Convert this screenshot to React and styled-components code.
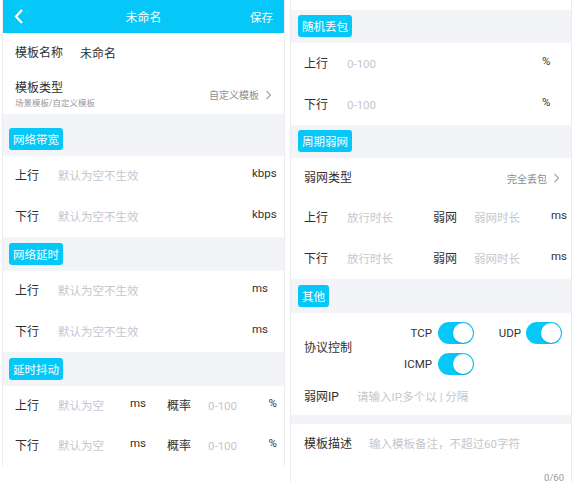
import React from 'react';
import styled, { createGlobalStyle } from 'styled-components';

const GlobalStyle = createGlobalStyle`
  body {
    margin: 0;
    background: #fff;
  }
`;

const Page = styled.div`
  display: flex;
  align-items: flex-start;
  gap: 5px;
  padding-left: 2px;
  font-family: Roboto, 'Noto Sans CJK SC', sans-serif;
  color: #333;
`;

const Panel = styled.div`
  box-sizing: border-box;
  width: ${p => p.$w}px;
  display: flex;
  flex-direction: column;
  border-left: 1px solid #ececef;
  border-right: 1px solid #ececef;
`;

const Header = styled.div`
  height: 33px;
  display: grid;
  grid-template-columns: 1fr auto 1fr;
  align-items: center;
  padding: 0 11px 0 11px;
  background: #06c8f8;
  color: #fff;
`;

const Title = styled.div`
  font-size: 12px;
`;

const Save = styled.div`
  font-size: 11.5px;
  justify-self: end;
`;

const Row = styled.div`
  box-sizing: border-box;
  height: ${p => p.$h ?? 40}px;
  display: flex;
  align-items: center;
  padding: 0 ${p => p.$pr ?? 7}px 0 ${p => p.$pl ?? 12}px;
  background: #fff;
`;

const Label = styled.div`
  width: ${p => p.$w || 43}px;
  flex-shrink: 0;
  font-size: 12px;
  line-height: 16px;
  color: #2f2f2f;
`;

const Value = styled.div`
  font-size: 12px;
  color: #2f2f2f;
`;

const Placeholder = styled.div`
  ${p => (p.$w ? `width: ${p.$w}px; flex-shrink: 0;` : 'flex: 1;')}
  font-size: 11.5px;
  line-height: 16px;
  color: #c4c7cd;
  white-space: nowrap;
`;

const Unit = styled.div`
  ${p => (p.$w ? `width: ${p.$w}px; flex-shrink: 0;` : '')}
  margin-bottom: 6px;
  font-size: 11.5px;
  color: #333;
`;

const TypeRow = styled(Row)`
  justify-content: space-between;
  padding-top: 3px;
`;

const TypeText = styled.div`
  display: flex;
  flex-direction: column;
`;

const SubText = styled.div`
  margin-top: 1px;
  font-size: 8.5px;
  line-height: 12px;
  color: #9a9a9a;
`;

const Picker = styled.div`
  display: flex;
  align-items: center;
  gap: 6px;
  margin-left: auto;
  font-size: 10px;
  color: #8c8c8c;
`;

const SectionHead = styled.div`
  box-sizing: border-box;
  height: ${p => p.$h}px;
  display: flex;
  align-items: flex-end;
  padding: 0 0 ${p => p.$pb || 6}px ${p => p.$pl || 6}px;
  background: #f3f4f7;
`;

const Badge = styled.div`
  height: 22px;
  display: flex;
  align-items: center;
  padding: 0 4px;
  border-radius: 3px;
  background: #06c8f8;
  color: #fff;
  font-size: 11.5px;
`;

const Spacer = styled.div`
  height: ${p => p.$h}px;
  background: ${p => p.$bg || '#fff'};
`;

const ProtoRow = styled.div`
  display: flex;
  align-items: center;
  padding: 9px 9px 4px 13px;
  background: #fff;
`;

const ToggleGrid = styled.div`
  display: grid;
  grid-template-columns: 70px 88px;
  row-gap: 9px;
  justify-items: end;
`;

const ToggleItem = styled.div`
  display: flex;
  align-items: center;
  gap: ${p => p.$gap || 6}px;
  font-size: 11.5px;
  color: #333;
`;

const Track = styled.div`
  box-sizing: border-box;
  width: 36px;
  height: 22px;
  display: flex;
  justify-content: flex-end;
  padding: 1px;
  border-radius: 11px;
  background: #06c8f8;
`;

const Knob = styled.div`
  width: 20px;
  height: 20px;
  border-radius: 50%;
  background: #fff;
  box-shadow: 0 1px 2px rgba(0, 0, 0, 0.15);
`;

const DescBox = styled.div`
  box-sizing: border-box;
  height: 58px;
  display: flex;
  flex-direction: column;
  padding: 12px 7px 0 13px;
  background: #fff;
`;

const Counter = styled.div`
  margin-top: 20px;
  align-self: flex-end;
  font-size: 9.5px;
  line-height: 12px;
  color: #999;
`;

const Chevron = ({ color = '#a8a8a8', w = 7, h = 10, sw = 1.2 }) => (
  <svg width={w} height={h} viewBox="0 0 7 10">
    <polyline points="1.5,1 5.5,5 1.5,9" fill="none" stroke={color} strokeWidth={sw} />
  </svg>
);

const Toggle = ({ label, gap }) => (
  <ToggleItem $gap={gap}>
    {label}
    <Track>
      <Knob />
    </Track>
  </ToggleItem>
);

const SimpleRow = ({ label, hint, unit, h }) => (
  <Row $h={h}>
    <Label>{label}</Label>
    <Placeholder>{hint}</Placeholder>
    <Unit $w={25}>{unit}</Unit>
  </Row>
);

const JitterRow = ({ label }) => (
  <Row>
    <Label>{label}</Label>
    <Placeholder $w={72}>默认为空</Placeholder>
    <Unit $w={37}>ms</Unit>
    <Label $w={41}>概率</Label>
    <Placeholder>0-100</Placeholder>
    <Unit>%</Unit>
  </Row>
);

const DropRow = ({ label }) => (
  <Row $h={41} $pl={13} $pr={4}>
    <Label>{label}</Label>
    <Placeholder>0-100</Placeholder>
    <Unit $w={25}>%</Unit>
  </Row>
);

const CycleRow = ({ label }) => (
  <Row $h={40.33} $pl={13} $pr={4}>
    <Label>{label}</Label>
    <Placeholder $w={86}>放行时长</Placeholder>
    <Label $w={41}>弱网</Label>
    <Placeholder>弱网时长</Placeholder>
    <Unit>ms</Unit>
  </Row>
);

export default function App() {
  return (
    <Page>
      <GlobalStyle />
      <Panel $w={283}>
        <Header>
          <svg width="10" height="15" viewBox="0 0 10 15">
            <polyline points="8,1 2,7.5 8,14" fill="none" stroke="#fff" strokeWidth="2.2" />
          </svg>
          <Title>未命名</Title>
          <Save>保存</Save>
        </Header>
        <Row $h={39}>
          <Label $w={65}>模板名称</Label>
          <Value>未命名</Value>
        </Row>
        <TypeRow $h={42} $pr={12}>
          <TypeText>
            <Label $w={80}>模板类型</Label>
            <SubText>场景模板/自定义模板</SubText>
          </TypeText>
          <Picker>
            自定义模板
            <Chevron />
          </Picker>
        </TypeRow>

        <SectionHead $h={42}>
          <Badge>网络带宽</Badge>
        </SectionHead>
        <SimpleRow label="上行" hint="默认为空不生效" unit="kbps" h={40.5} />
        <SimpleRow label="下行" hint="默认为空不生效" unit="kbps" h={40.5} />

        <SectionHead $h={34}>
          <Badge>网络延时</Badge>
        </SectionHead>
        <SimpleRow label="上行" hint="默认为空不生效" unit="ms" h={40.5} />
        <SimpleRow label="下行" hint="默认为空不生效" unit="ms" h={40.5} />

        <SectionHead $h={34}>
          <Badge>延时抖动</Badge>
        </SectionHead>
        <JitterRow label="上行" />
        <JitterRow label="下行" />
      </Panel>

      <Panel $w={282}>
        <Spacer $h={10} />
        <SectionHead $h={33} $pl={7}>
          <Badge>随机丢包</Badge>
        </SectionHead>
        <DropRow label="上行" />
        <DropRow label="下行" />

        <SectionHead $h={33} $pl={7}>
          <Badge>周期弱网</Badge>
        </SectionHead>
        <Row $h={40.33} $pl={13} $pr={11}>
          <Label $w={80}>弱网类型</Label>
          <Picker>
            完全丢包
            <Chevron />
          </Picker>
        </Row>
        <CycleRow label="上行" />
        <CycleRow label="下行" />

        <SectionHead $h={34} $pl={7}>
          <Badge>其他</Badge>
        </SectionHead>
        <ProtoRow>
          <Label $w={100}>协议控制</Label>
          <ToggleGrid>
            <Toggle label="TCP" gap={6} />
            <Toggle label="UDP" gap={5} />
            <Toggle label="ICMP" gap={6} />
          </ToggleGrid>
        </ProtoRow>
        <Row $h={36} $pl={13}>
          <Label $w={53}>弱网IP</Label>
          <Placeholder>请输入IP,多个以 | 分隔</Placeholder>
        </Row>
        <Spacer $h={9} $bg="#f3f4f7" />
        <DescBox>
          <Row $h={16} $pl={0} $pr={0}>
            <Label $w={65}>模板描述</Label>
            <Placeholder>输入模板备注，不超过60字符</Placeholder>
          </Row>
          <Counter>0/60</Counter>
        </DescBox>
      </Panel>
    </Page>
  );
}
